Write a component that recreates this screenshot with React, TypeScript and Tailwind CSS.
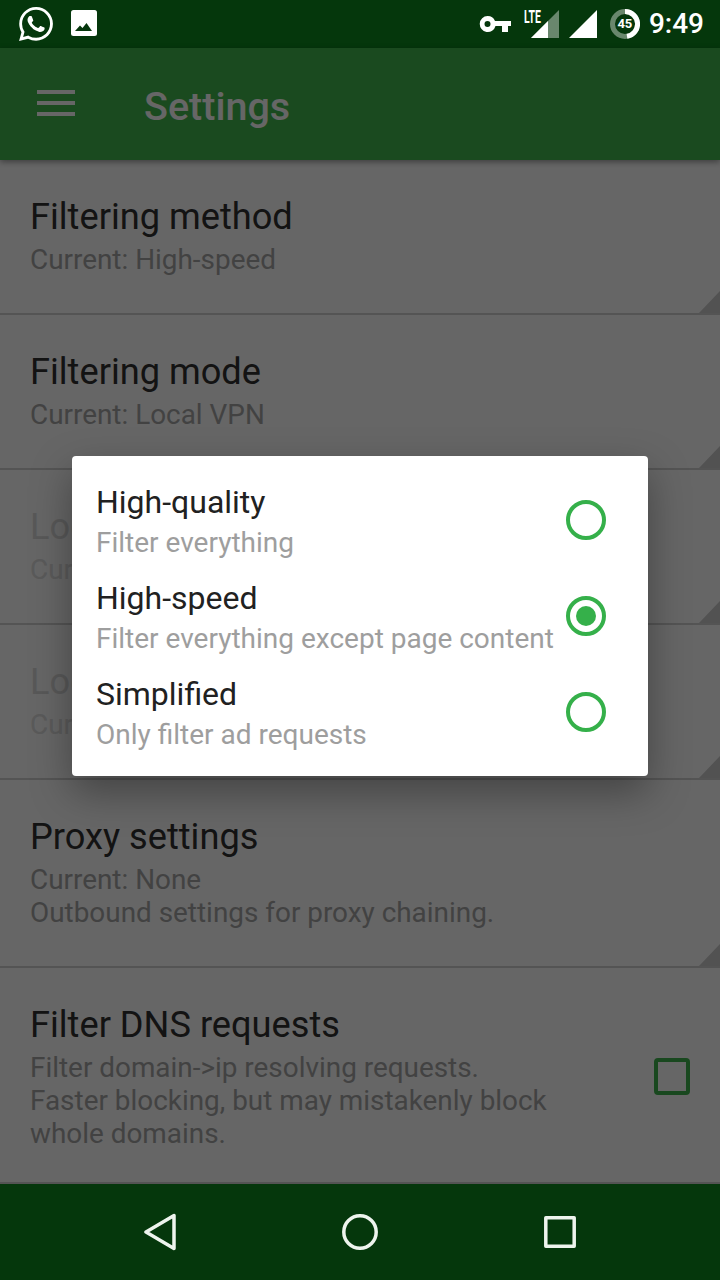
const font = { fontFamily: 'Roboto, sans-serif' };

function Row({ title, lines, hasTriangle = true, heightClass, disabled = false, check = false }: { title: string; lines: string[]; hasTriangle?: boolean; heightClass: string; disabled?: boolean; check?: boolean }) {
  return (
    <div className={`relative flex items-start border-b-2 border-[#d2d2d2] pl-[30px] pt-[33px] ${heightClass}`}>
      <div className="flex flex-col">
        <div className={`text-[36.2px] leading-[48px] ${disabled ? 'text-[#dcdcdc]' : 'text-[#303030]'}`}>{title}</div>
        <div className={`mt-[2px] text-[27.9px] leading-[33px] ${disabled ? 'text-[#e0e0e0]' : 'text-[#a6a6a6]'}`}>
          {lines.map((l) => (
            <div key={l}>{l}</div>
          ))}
        </div>
      </div>
      {hasTriangle && <div className="absolute bottom-0 right-0 h-[22px] w-[21px] bg-[#cdcdcd] [clip-path:polygon(100%_0,100%_100%,0_100%)]" />}
      {check && <div className="absolute right-[30px] top-[90px] h-[37px] w-[36px] rounded-[4px] border-[4px] border-[#3fb54e]" />}
    </div>
  );
}

function Option({ title, sub, selected = false }: { title: string; sub: string; selected?: boolean }) {
  return (
    <div className="flex h-[96px] items-center justify-between pl-[24px] pr-[42px]">
      <div className="flex flex-col">
        <div className="text-[32px] leading-[46px] text-[#212121]">{title}</div>
        <div className="text-[28px] leading-[36px] text-[#9e9e9e]">{sub}</div>
      </div>
      <div className="flex h-[40px] w-[40px] items-center justify-center rounded-full border-[4px] border-[#35b04a]">
        {selected && <div className="h-[20px] w-[20px] rounded-full bg-[#35b04a]" />}
      </div>
    </div>
  );
}

export default function App() {
  return (
    <div className="flex h-[1280px] w-[720px] flex-col overflow-hidden bg-white" style={font}>
      <div className="flex h-[48px] shrink-0 items-center justify-between bg-[#05370c] pl-[19px] pr-[16px]">
        <div className="flex items-center gap-[18px]">
          <svg width="34" height="34" viewBox="0 0 24 24" fill="#fff">
            <path d="M17.47 14.38c-.3-.15-1.76-.87-2.03-.97-.27-.1-.47-.15-.67.15-.2.3-.77.97-.94 1.16-.17.2-.35.22-.65.07-.3-.15-1.25-.46-2.39-1.47-.88-.79-1.48-1.76-1.65-2.06-.17-.3-.02-.46.13-.61.13-.13.3-.35.45-.52.15-.17.2-.3.3-.5.1-.2.05-.37-.02-.52-.08-.15-.67-1.61-.92-2.21-.24-.58-.49-.5-.67-.51h-.57c-.2 0-.52.07-.79.37-.27.3-1.04 1.02-1.04 2.48s1.07 2.88 1.21 3.07c.15.2 2.1 3.2 5.08 4.49.71.31 1.26.49 1.69.63.71.23 1.36.19 1.87.12.57-.09 1.76-.72 2.01-1.41.25-.7.25-1.29.17-1.41-.07-.13-.27-.2-.57-.35zM12.05 21.79h-.01a9.87 9.87 0 0 1-5.03-1.38l-.36-.21-3.74.98 1-3.65-.24-.37a9.86 9.86 0 0 1-1.51-5.26c0-5.45 4.44-9.88 9.89-9.88 2.64 0 5.12 1.03 6.99 2.9a9.83 9.83 0 0 1 2.89 6.99c0 5.45-4.44 9.88-9.88 9.88zM20.46 3.49A11.82 11.82 0 0 0 12.05 0C5.5 0 .16 5.34.16 11.89c0 2.1.55 4.14 1.59 5.95L.06 24l6.3-1.65a11.88 11.88 0 0 0 5.68 1.45h.01c6.55 0 11.89-5.34 11.89-11.89 0-3.18-1.24-6.16-3.49-8.41z" />
          </svg>
          <svg width="26" height="26" viewBox="0 0 26 26" className="mb-[2px]">
            <rect width="26" height="26" rx="2.5" fill="#fff" />
            <path d="M4 21 L9 15.5 L11.5 18 L15.5 13 L21 21 Z" fill="#05370c" />
          </svg>
        </div>
        <div className="flex items-center">
          <svg width="32" height="18" viewBox="0 0 32 18" fill="#fff">
            <path fillRule="evenodd" d="M8.5 1a8 8 0 0 1 7.5 5h16v5h-3v6h-6v-6h-6.5a8 8 0 1 1-8-10zm0 5a3 3 0 1 0 0 6 3 3 0 0 0 0-6z" />
          </svg>
          <div className="relative ml-[13px] h-[48px] w-[35px]">
            <span className="absolute left-0 top-[6px] origin-left text-[18px] font-bold leading-[22px] text-white [transform:scaleX(.58)]">LTE</span>
            <svg width="35" height="48" viewBox="0 0 35 48" className="absolute left-0 top-0">
              <path d="M35 10 V38 H7 Z" fill="#fff" fillOpacity="0.4" />
              <path d="M24 21 V38 H7 Z" fill="#fff" />
            </svg>
          </div>
          <svg width="28" height="28" viewBox="0 0 28 28" fill="#fff" className="ml-[10px]">
            <path d="M28 0 V28 H0 Z" />
          </svg>
          <div className="relative ml-[13px] flex h-[30px] w-[30px] items-center justify-center">
            <svg width="30" height="30" viewBox="0 0 30 30" className="absolute inset-0">
              <circle cx="15" cy="15" r="12.5" fill="none" stroke="#fff" strokeOpacity="0.4" strokeWidth="5" />
              <path d="M15 2.5 A12.5 12.5 0 0 1 17 27.35" fill="none" stroke="#fff" strokeWidth="5" />
            </svg>
            <span className="text-[13px] font-bold text-white">45</span>
          </div>
          <div className="ml-[9px] text-[28px] font-medium leading-none text-white">9:49</div>
        </div>
      </div>

      <div className="relative min-h-0 flex-1">
        <div className="flex h-[112px] items-center bg-[#41b94e] pl-[37px] shadow-[0_2px_6px_rgba(0,0,0,0.4)]">
          <svg width="38" height="26" viewBox="0 0 38 26" fill="#fff" className="mb-[2px]">
            <rect y="0" width="38" height="4" />
            <rect y="11" width="38" height="4" />
            <rect y="22" width="38" height="4" />
          </svg>
          <div className="ml-[69px] mt-[5px] text-[39.5px] font-medium leading-[48px] text-white">Settings</div>
        </div>
        <Row heightClass="h-[155px]" title="Filtering method" lines={['Current: High-speed']} />
        <Row heightClass="h-[155px]" title="Filtering mode" lines={['Current: Local VPN']} />
        <Row heightClass="h-[155px]" disabled title="Local" lines={['Current']} />
        <Row heightClass="h-[155px]" disabled title="Local" lines={['Current']} />
        <Row heightClass="h-[188px]" title="Proxy settings" lines={['Current: None', 'Outbound settings for proxy chaining.']} />
        <Row heightClass="h-[216px]" hasTriangle={false} check title="Filter DNS requests" lines={['Filter domain->ip resolving requests.', 'Faster blocking, but may mistakenly block', 'whole domains.']} />

        <div className="absolute inset-0 flex items-center justify-center bg-black/60">
          <div className="w-[576px] rounded-[4px] bg-white py-[16px] shadow-[0_16px_40px_rgba(0,0,0,0.35)]">
            <Option title="High-quality" sub="Filter everything" />
            <Option title="High-speed" sub="Filter everything except page content" selected />
            <Option title="Simplified" sub="Only filter ad requests" />
          </div>
        </div>
      </div>

      <div className="flex h-[96px] shrink-0 items-center justify-between bg-[#05370c] px-[144px]">
        <svg width="32" height="38" viewBox="0 0 32 38" fill="none" stroke="#eef4ee" strokeWidth="3.5" strokeLinejoin="round">
          <path d="M30 2.5 V35.5 L2 19 Z" />
        </svg>
        <svg width="36" height="36" viewBox="0 0 36 36" fill="none" stroke="#eef4ee" strokeWidth="3.5">
          <circle cx="18" cy="18" r="16.2" />
        </svg>
        <svg width="32" height="32" viewBox="0 0 32 32" fill="none" stroke="#eef4ee" strokeWidth="3.5" strokeLinejoin="round">
          <rect x="1.8" y="1.8" width="28.4" height="28.4" />
        </svg>
      </div>
    </div>
  );
}
